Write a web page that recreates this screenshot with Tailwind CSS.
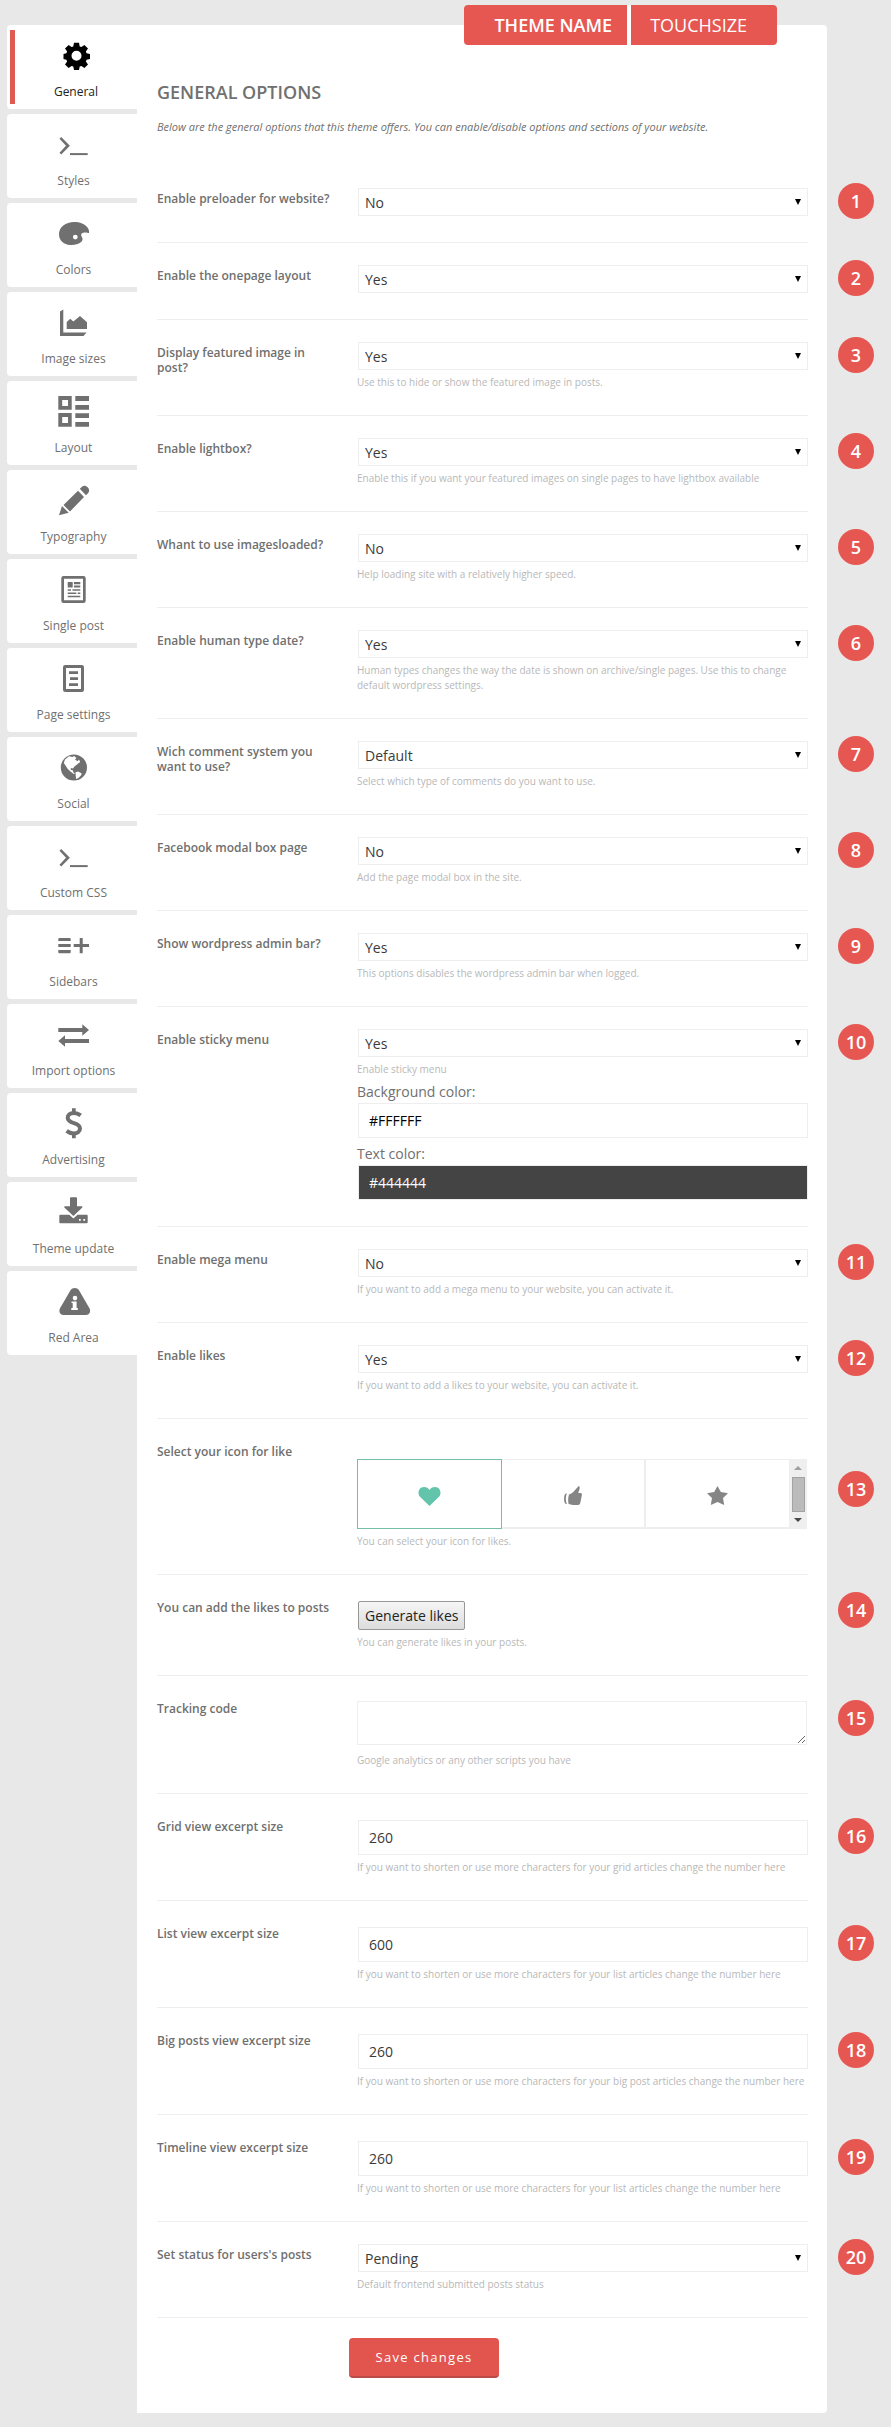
<!DOCTYPE html>
<html lang="en">
<head>
<meta charset="utf-8">
<meta name="viewport" content="width=device-width, initial-scale=1">
<title>General options</title>
<script src="https://cdn.jsdelivr.net/npm/@tailwindcss/browser@4"></script>
</head>
<body class="min-h-screen bg-[#e8e8e8] font-['Open_Sans','Noto_Sans',sans-serif] text-sm text-[#6f706f]">
<div class="relative flex items-start pt-[25px] pr-16 pb-3.5 pl-[7px]">

  <header class="absolute top-[5px] right-[114px] flex h-10 gap-1 overflow-hidden rounded bg-white text-lg text-white">
    <a href="#" class="flex items-center bg-[#e65752] pr-[15px] pl-[30px] font-semibold">THEME NAME</a>
    <a href="#" class="flex items-center bg-[#e65752] pr-[30px] pl-[19px]">TOUCHSIZE</a>
  </header>

  <nav aria-label="Options sections" class="flex w-[130px] shrink-0 flex-col gap-[5px] text-xs [&_a]:flex [&_a]:h-[84px] [&_a]:flex-col [&_a]:items-center [&_a]:rounded-l [&_a]:bg-white [&_a]:pt-[15px] [&_a]:pl-[3px] [&_span]:mt-[13px] [&_span]:leading-4 [&_svg]:size-[31px] [&_svg]:overflow-visible [&_svg]:fill-current">
    <a href="#general" aria-current="page" class="relative text-[#222] before:absolute before:top-[5px] before:bottom-[5px] before:left-[3px] before:w-[5px] before:bg-[#e05a54]">
      <svg viewBox="0 0 31 31" class="ml-[5px] text-black" aria-hidden="true"><path fill-rule="evenodd" d="M13 2.8h5l.7 3.6 1.7.7 3-2.1 3.6 3.6-2.1 3 .7 1.7 3.4.7v5l-3.4.7-.7 1.7 2.1 3-3.6 3.6-3-2.1-1.7.7-.7 3.4h-5l-.7-3.4-1.7-.7-3 2.1L4 24.4l2.100-3-.7-1.700-2.900-.7v-5l2.900-.7.7-1.700-2.100-3L7.600 5l3 2.100 1.700-.7zM15.500 10.800a5 5 0 1 0 0 10 5 5 0 0 0 0-10z"/></svg>
      <span class="ml-[5px]">General</span>
    </a>
    <a href="#styles">
      <svg viewBox="0 0 31 31" aria-hidden="true"><path d="M3.200 8 11.900 16.700 3.200 25.400 1.500 23.700 8 16.700 1.500 9.700z"/><path d="M12 24.100h17.700v2H12z"/></svg>
      <span>Styles</span>
    </a>
    <a href="#colors">
      <svg viewBox="0 0 31 31" aria-hidden="true"><path fill-rule="evenodd" d="M1 17C.600 9 8 4 16 4c6 0 11 2 13.500 5.500C31 11.500 31.300 13.500 31 15c-1.500 0-2.500-.8-5-.5-2 .3-3.200 1.500-2.800 3 .4 1.300 1.600 2.500 1.300 4.200-.4 2.200-2.500 3.300-5 4.300-2.500.9-5 1.200-7.500 1C6 26.600 1.500 23 1 17zm16.300-.300a2.400 2.400 0 1 0 0 4.800 2.400 2.400 0 0 0 0-4.800z"/></svg>
      <span>Colors</span>
    </a>
    <a href="#image-sizes">
      <svg viewBox="0 0 31 31" aria-hidden="true"><path d="M2 4.500 5.300 2.500V25.500H28.500L25.500 29H2z"/><path d="M8.700 22v-7l3.600-3.200 3 2.800L22 9l7 6.300V22z"/></svg>
      <span>Image sizes</span>
    </a>
    <a href="#layout">
      <svg viewBox="0 0 31 31" aria-hidden="true"><path fill-rule="evenodd" d="M.300 0h13.400v13.700H.300zM4.200 4v6h5.800V4zM.300 17h13.400v13.700H.300zm3.900 4v6h5.800v-6z"/><path d="M17.300 0H31v5H17.300zM17.300 9H31v4.700H17.300zM17.300 17.300H31V22H17.300zM17.300 26H31v4.700H17.300z"/></svg>
      <span>Layout</span>
    </a>
    <a href="#typography">
      <svg viewBox="0 0 31 31" aria-hidden="true"><path d="M21.800 3.800 24 1.700C26 0 28 .600 29.600 2.300c1.800 1.800 2 4 .6 5.700L28 10.200zM20 5.700 26 12 12 26.500 5.500 20zM4 21l6.700 6.800L1 30.200z"/></svg>
      <span>Typography</span>
    </a>
    <a href="#single-post">
      <svg viewBox="0 0 31 31" aria-hidden="true"><path fill-rule="evenodd" d="M5.500 2h20a2.200 2.200 0 0 1 2.200 2.200v22.600a2.200 2.200 0 0 1-2.200 2.200h-20a2.200 2.200 0 0 1-2.200-2.200V4.200A2.200 2.200 0 0 1 5.500 2zM6 4.700v21.600h19V4.700z"/><path d="M9.700 8h5v5.500h-5zM16 8h6.300v2.200H16zM16 11.500h6.300v2H16zM9.700 15.200h3.300v1.500H9.700zM14.500 15.200h7.800v1.500h-7.800zM9.700 18.500h8.600V20H9.700zM19.700 18.500h2.600V20h-2.600zM9.700 21.800h12.600v1.500H9.700z"/></svg>
      <span>Single post</span>
    </a>
    <a href="#page-settings">
      <svg viewBox="0 0 31 31" aria-hidden="true"><path fill-rule="evenodd" d="M7.200 2h16.600A2.200 2.200 0 0 1 26 4.200v22.600a2.200 2.200 0 0 1-2.200 2.200H7.200A2.200 2.200 0 0 1 5 26.800V4.200A2.200 2.200 0 0 1 7.200 2zm.8 2.900v21.200h15V4.900z"/><path d="M11 8.300h9V11h-9zM12 14.300h8V17h-8zM11 20.300h9V23h-9z"/></svg>
      <span>Page settings</span>
    </a>
    <a href="#social">
      <svg viewBox="0 0 31 31" aria-hidden="true"><path fill-rule="evenodd" d="M15.900 2.400a13.100 13.100 0 1 0 0 26.200 13.100 13.100 0 0 0 0-26.200zM7 7.500 11 4.300l3.500.7 1.500-1 2.500 2-1.500 1.500 2.500 1.800 1.500-1.800 1.200 2.500-3.200 2.500-2.500 2-1.500 2-2-.5-.5 1.800 2.300.4.700 2.300 1.500 1-1.200.5-2.800-2L9.800 17 7.500 13.500 5.800 11zM17.500 20.300l2.500-.8 3.500 1.700-.2 1.800-2.800 3-2.300 1-.5-3.200z"/></svg>
      <span>Social</span>
    </a>
    <a href="#custom-css">
      <svg viewBox="0 0 31 31" aria-hidden="true"><path d="M3.200 8 11.900 16.700 3.200 25.400 1.500 23.700 8 16.700 1.500 9.700z"/><path d="M12 24.100h17.700v2H12z"/></svg>
      <span>Custom CSS</span>
    </a>
    <a href="#sidebars">
      <svg viewBox="0 0 31 31" aria-hidden="true"><path d="M1.300 8h10.400a1 1 0 0 1 1 1v2H.300V9a1 1 0 0 1 1-1zM.300 14h12.400v3H.300zM.300 20h12.400v2.300a1 1 0 0 1-1 1H1.300a1 1 0 0 1-1-1zM21.700 8h3v6H31v3h-6.300v6.300h-3V17h-6v-3h6z"/></svg>
      <span>Sidebars</span>
    </a>
    <a href="#import-options">
      <svg viewBox="0 0 31 31" aria-hidden="true"><path d="M.300 9h24V5.300l6.700 5.700-6.700 5.700V13H.300zM31 20H7v-3.700L.300 22 7 27.700V24h24z"/></svg>
      <span>Import options</span>
    </a>
    <a href="#advertising">
      <svg viewBox="0 0 31 31" aria-hidden="true"><path d="M14 .300h3.700v5H14zM14 25.300h3.700v5H14z"/><path class="fill-none stroke-current stroke-4" d="M22.700 7.400C20.500 5.700 18 5 15.700 5c-3.600 0-6 2-6 4.800 0 3 2.700 4.300 6.300 5.400 3.600 1.100 6 2.600 6 5.400 0 3-2.700 4.900-6.200 4.900-2.600 0-5-.8-7.200-2.600"/></svg>
      <span>Advertising</span>
    </a>
    <a href="#theme-update">
      <svg viewBox="0 0 31 31" aria-hidden="true"><path d="M12 1.300a1 1 0 0 1 1-1h5a1 1 0 0 1 1 1v8h4.500c1 0 1.200.7.600 1.400L15.400 19 6.600 10.700c-.6-.7-.4-1.400.6-1.400H12z"/><path fill-rule="evenodd" d="M2.300 17.700h9l4.100 3.700 4.100-3.700h9.200a1 1 0 0 1 1 1v6.600a1 1 0 0 1-1 1H2.300a1 1 0 0 1-1-1v-6.600a1 1 0 0 1 1-1zM21 22v1.800h1.800V22zm4.300 0v1.800h1.800V22z"/></svg>
      <span>Theme update</span>
    </a>
    <a href="#red-area">
      <svg viewBox="0 0 31 31" aria-hidden="true"><path fill-rule="evenodd" d="M12.500 4.300C14.500 1.300 19 1.300 21 4.300l10.600 18.200c1.500 3-.3 6.500-3.600 6.500H5.500c-3.300 0-5-3.500-3.600-6.500zM17 9.800a2.300 2.300 0 1 0 0 4.600 2.300 2.300 0 0 0 0-4.600zM13.500 15.500v1.600h1.200V22h-1.400v2h6.500v-2h-1.200v-6.500z"/></svg>
      <span>Red Area</span>
    </a>
  </nav>

  <main class="min-w-0 flex-1 rounded-r bg-white pt-[55px] pr-[19px] pb-[35px] pl-5">
    <h1 class="text-lg leading-6 font-semibold">GENERAL OPTIONS</h1>
    <p class="mt-[15px] mb-[31px] text-[11px] leading-4 italic">Below are the general options that this theme offers. You can enable/disable options and sections of your website.</p>

    <!-- Each .row is a label column, a control column and a numbered badge outside the panel -->
    <form class="[&_.badge]:absolute [&_.badge]:top-[17px] [&_.badge]:left-full [&_.badge]:ml-[30px] [&_.badge]:flex [&_.badge]:size-9 [&_.badge]:items-center [&_.badge]:justify-center [&_.badge]:rounded-full [&_.badge]:bg-[#e65752] [&_.badge]:text-lg [&_.badge]:font-semibold [&_.badge]:text-white [&_.hint]:mt-[5px] [&_.hint]:-mb-px [&_.hint]:text-[10px] [&_.hint]:leading-[15px] [&_.hint]:text-[#b8b8b8] [&_.row]:relative [&_.row]:grid [&_.row]:grid-cols-[200px_minmax(0,1fr)] [&_.row]:border-b [&_.row]:border-[#eee] [&_.row]:pt-[22px] [&_.row]:pb-[26px] [&_.title]:mt-[3px] [&_.title]:pr-6 [&_.title]:text-xs [&_.title]:leading-[15px] [&_.title]:font-semibold [&_.drop]:relative [&_.drop]:ml-px [&_.drop_svg]:pointer-events-none [&_.drop_svg]:absolute [&_.drop_svg]:top-[11px] [&_.drop_svg]:right-[7px] [&_.drop_svg]:h-[6px] [&_.drop_svg]:w-[6px] [&_.drop_svg]:fill-black [&_select]:block [&_select]:h-7 [&_select]:w-full [&_select]:appearance-none [&_select]:border [&_select]:border-[#eee] [&_select]:bg-white [&_select]:px-1.5 [&_select]:pt-0.5 [&_select]:text-[#3a3a3a] [&_input[type=text]]:ml-px [&_input[type=text]]:block [&_input[type=text]]:h-[35px] [&_input[type=text]]:w-[calc(100%-1px)] [&_input[type=text]]:border [&_input[type=text]]:border-[#eee] [&_input[type=text]]:px-2.5">

      <div class="row">
        <label class="title" for="f1">Enable preloader for website?</label>
        <div><div class="drop"><select id="f1"><option>No</option><option>Yes</option></select><svg viewBox="0 0 6 6" aria-hidden="true"><path d="M0 0h6L3 6z"/></svg></div></div>
        <span class="badge">1</span>
      </div>
      <div class="row">
        <label class="title" for="f2">Enable the onepage layout</label>
        <div><div class="drop"><select id="f2"><option>Yes</option><option>No</option></select><svg viewBox="0 0 6 6" aria-hidden="true"><path d="M0 0h6L3 6z"/></svg></div></div>
        <span class="badge">2</span>
      </div>
      <div class="row">
        <label class="title" for="f3">Display featured image in post?</label>
        <div><div class="drop"><select id="f3"><option>Yes</option><option>No</option></select><svg viewBox="0 0 6 6" aria-hidden="true"><path d="M0 0h6L3 6z"/></svg></div>
          <p class="hint">Use this to hide or show the featured image in posts.</p></div>
        <span class="badge">3</span>
      </div>
      <div class="row">
        <label class="title" for="f4">Enable lightbox?</label>
        <div><div class="drop"><select id="f4"><option>Yes</option><option>No</option></select><svg viewBox="0 0 6 6" aria-hidden="true"><path d="M0 0h6L3 6z"/></svg></div>
          <p class="hint">Enable this if you want your featured images on single pages to have lightbox available</p></div>
        <span class="badge">4</span>
      </div>
      <div class="row">
        <label class="title" for="f5">Whant to use imagesloaded?</label>
        <div><div class="drop"><select id="f5"><option>No</option><option>Yes</option></select><svg viewBox="0 0 6 6" aria-hidden="true"><path d="M0 0h6L3 6z"/></svg></div>
          <p class="hint">Help loading site with a relatively higher speed.</p></div>
        <span class="badge">5</span>
      </div>
      <div class="row">
        <label class="title" for="f6">Enable human type date?</label>
        <div><div class="drop"><select id="f6"><option>Yes</option><option>No</option></select><svg viewBox="0 0 6 6" aria-hidden="true"><path d="M0 0h6L3 6z"/></svg></div>
          <p class="hint">Human types changes the way the date is shown on archive/single pages. Use this to change default wordpress settings.</p></div>
        <span class="badge">6</span>
      </div>
      <div class="row">
        <label class="title" for="f7">Wich comment system you want to use?</label>
        <div><div class="drop"><select id="f7"><option>Default</option></select><svg viewBox="0 0 6 6" aria-hidden="true"><path d="M0 0h6L3 6z"/></svg></div>
          <p class="hint">Select which type of comments do you want to use.</p></div>
        <span class="badge">7</span>
      </div>
      <div class="row">
        <label class="title" for="f8">Facebook modal box page</label>
        <div><div class="drop"><select id="f8"><option>No</option><option>Yes</option></select><svg viewBox="0 0 6 6" aria-hidden="true"><path d="M0 0h6L3 6z"/></svg></div>
          <p class="hint">Add the page modal box in the site.</p></div>
        <span class="badge">8</span>
      </div>
      <div class="row">
        <label class="title" for="f9">Show wordpress admin bar?</label>
        <div><div class="drop"><select id="f9"><option>Yes</option><option>No</option></select><svg viewBox="0 0 6 6" aria-hidden="true"><path d="M0 0h6L3 6z"/></svg></div>
          <p class="hint">This options disables the wordpress admin bar when logged.</p></div>
        <span class="badge">9</span>
      </div>
      <div class="row">
        <label class="title" for="f10">Enable sticky menu</label>
        <div><div class="drop"><select id="f10"><option>Yes</option><option>No</option></select><svg viewBox="0 0 6 6" aria-hidden="true"><path d="M0 0h6L3 6z"/></svg></div>
          <p class="hint">Enable sticky menu</p>
          <label for="f10bg" class="block pt-1.5 pb-px leading-5">Background color:</label>
          <input id="f10bg" type="text" value="#FFFFFF" class="bg-white text-black">
          <label for="f10text" class="block pt-1.5 pb-px leading-5">Text color:</label>
          <input id="f10text" type="text" value="#444444" class="bg-[#444] bg-clip-padding text-white">
        </div>
        <span class="badge">10</span>
      </div>
      <div class="row">
        <label class="title" for="f11">Enable mega menu</label>
        <div><div class="drop"><select id="f11"><option>No</option><option>Yes</option></select><svg viewBox="0 0 6 6" aria-hidden="true"><path d="M0 0h6L3 6z"/></svg></div>
          <p class="hint">If you want to add a mega menu to your website, you can activate it.</p></div>
        <span class="badge">11</span>
      </div>
      <div class="row">
        <label class="title" for="f12">Enable likes</label>
        <div><div class="drop"><select id="f12"><option>Yes</option><option>No</option></select><svg viewBox="0 0 6 6" aria-hidden="true"><path d="M0 0h6L3 6z"/></svg></div>
          <p class="hint">If you want to add a likes to your website, you can activate it.</p></div>
        <span class="badge">12</span>
      </div>

      <div class="row" role="radiogroup" aria-labelledby="like-title">
        <span id="like-title" class="title">Select your icon for like</span>
        <div class="pt-[18px]">
          <div class="mr-px flex h-[70px]">
            <label class="flex flex-1 items-center justify-center border border-[#74bfa5] pt-1 text-[#62c5ab]">
              <input type="radio" name="like" class="sr-only" aria-label="Heart" checked>
              <svg viewBox="0 0 23 19" class="h-[19px] w-[23px] fill-current" aria-hidden="true"><path d="M11.500 19 2 9.800C-.7 7 .1 0 6 0c2.500 0 4.300 1 5.500 3C12.700 1 14.500 0 17 0c5.900 0 6.700 7 4 9.800z"/></svg>
            </label>
            <label class="flex flex-1 items-center justify-center border border-r-2 border-b-2 border-l-0 border-[#eee] pt-1 text-[#858585]">
              <input type="radio" name="like" class="sr-only" aria-label="Thumb up">
              <svg viewBox="0 0 18 19" class="h-[19px] w-[18px] fill-current" aria-hidden="true"><path d="M5 8.500C7.500 8 9.500 6 11.500 3.500L14.700 0c1.300.5 1.200 2 .8 3.200L14.200 7H17c1 .4 1 1.500.8 2.500l-1.500 7.300c-.3 1.500-1 2.200-2.300 2.200H9c-1.800 0-3-.7-4.500-1.200C4 14.500 4 11.500 5 8.500z"/><path d="M2.800 7.500C1.500 11 1.500 14.500 2.800 18c-1.200 0-2-.7-2.300-1.800-.6-2.500-.6-4.800 0-7C.800 8 1.600 7.500 2.800 7.500z"/></svg>
            </label>
            <label class="flex flex-1 items-center justify-center border border-r-0 border-b-2 border-l-0 border-[#eee] pt-1 text-[#858585]">
              <input type="radio" name="like" class="sr-only" aria-label="Star">
              <svg viewBox="0 0 21 19" class="h-[19px] w-[21px] fill-current" aria-hidden="true"><path d="M10.500 0 13.800 6 21 7.200 16 12l1.200 7-6.700-3-6.700 3L5 12 0 7.200 7.200 6z"/></svg>
            </label>
            <div class="flex w-[18px] flex-col items-center justify-between bg-[#efefef] py-[7px]">
              <svg viewBox="0 0 8 4" class="h-1 w-2 fill-[#a0a0a0]" aria-hidden="true"><path d="M0 4 4 0l4 4z"/></svg>
              <div class="h-[35px] w-[13px] border border-[#a3a3a3] bg-[#bbb]"></div>
              <svg viewBox="0 0 8 4" class="h-1 w-2 fill-[#484848]" aria-hidden="true"><path d="M0 0h8L4 4z"/></svg>
            </div>
          </div>
          <p class="hint">You can select your icon for likes.</p>
        </div>
        <span class="badge top-[52px]!">13</span>
      </div>

      <div class="row">
        <label class="title" for="f14">You can add the likes to posts</label>
        <div class="pt-1">
          <button id="f14" type="button" class="ml-px block h-[29px] rounded-xs border border-[#979797] bg-linear-to-b from-[#f6f6f6] to-[#dcdcdc] px-1.5 text-[#222]">Generate likes</button>
          <p class="hint">You can generate likes in your posts.</p>
        </div>
        <span class="badge">14</span>
      </div>
      <div class="row">
        <label class="title" for="f15">Tracking code</label>
        <div class="pt-[3px] pr-px">
          <textarea id="f15" class="block h-11 w-full resize-y border border-[#eee] bg-white px-2.5 py-1"></textarea>
          <p class="hint mt-2!">Google analytics or any other scripts you have</p>
        </div>
        <span class="badge top-[24px]!">15</span>
      </div>
      <div class="row">
        <label class="title" for="f16">Grid view excerpt size</label>
        <div class="pt-1"><input id="f16" type="text" value="260" class="text-[#3a3a3a]">
          <p class="hint">If you want to shorten or use more characters for your grid articles change the number here</p></div>
        <span class="badge top-[24px]!">16</span>
      </div>
      <div class="row">
        <label class="title" for="f17">List view excerpt size</label>
        <div class="pt-1"><input id="f17" type="text" value="600" class="text-[#3a3a3a]">
          <p class="hint">If you want to shorten or use more characters for your list articles change the number here</p></div>
        <span class="badge top-[24px]!">17</span>
      </div>
      <div class="row">
        <label class="title" for="f18">Big posts view excerpt size</label>
        <div class="pt-1"><input id="f18" type="text" value="260" class="text-[#3a3a3a]">
          <p class="hint">If you want to shorten or use more characters for your big post articles change the number here</p></div>
        <span class="badge top-[24px]!">18</span>
      </div>
      <div class="row">
        <label class="title" for="f19">Timeline view excerpt size</label>
        <div class="pt-1"><input id="f19" type="text" value="260" class="text-[#3a3a3a]">
          <p class="hint">If you want to shorten or use more characters for your list articles change the number here</p></div>
        <span class="badge top-[24px]!">19</span>
      </div>
      <div class="row">
        <label class="title" for="f20">Set status for users's posts</label>
        <div><div class="drop"><select id="f20"><option>Pending</option></select><svg viewBox="0 0 6 6" aria-hidden="true"><path d="M0 0h6L3 6z"/></svg></div>
          <p class="hint">Default frontend submitted posts status</p></div>
        <span class="badge">20</span>
      </div>

      <button type="submit" class="mt-5 ml-48 block h-10 w-[150px] rounded border-b-2 border-[#b94c47] bg-[#e2554e] text-[13px] tracking-widest text-white">Save changes</button>
    </form>
  </main>
</div>
</body>
</html>
